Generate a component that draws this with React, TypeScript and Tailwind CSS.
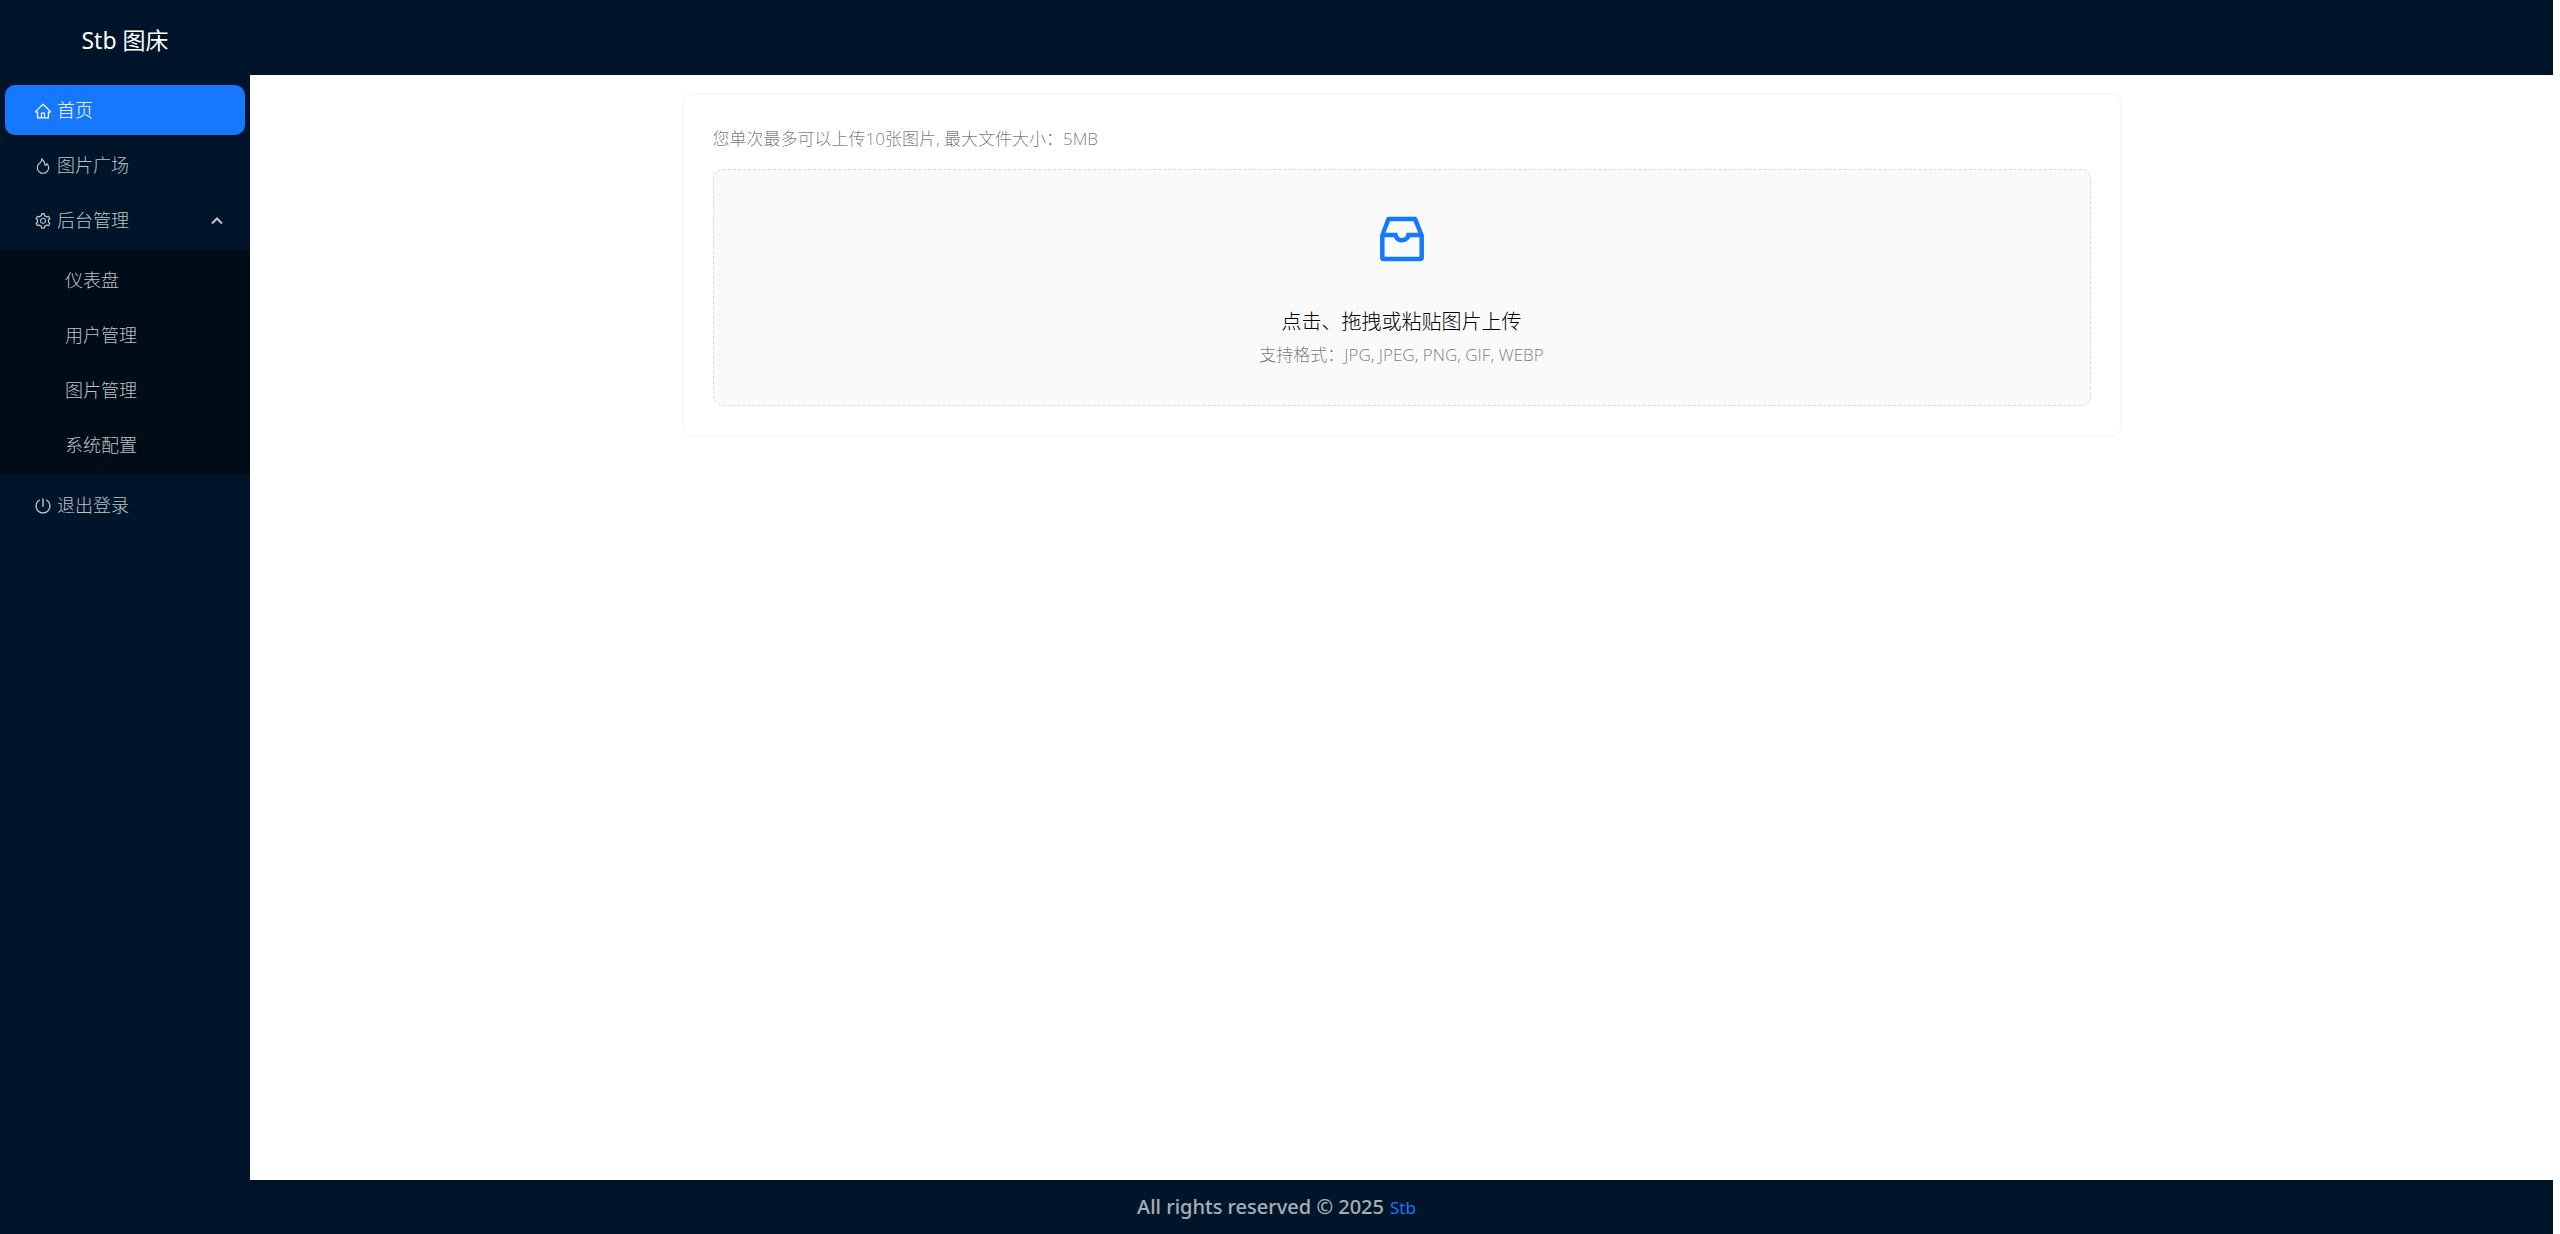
import { useState } from "react";
import {
  AiOutlineFire,
  AiOutlineHome,
  AiOutlineInbox,
  AiOutlinePoweroff,
  AiOutlineSetting,
} from "react-icons/ai";

const adminItems = [
  { key: "dashboard", label: "仪表盘" },
  { key: "users", label: "用户管理" },
  { key: "images", label: "图片管理" },
  { key: "system", label: "系统配置" },
];

const itemClass =
  "mx-[5px] flex h-[50px] items-center gap-[5px] rounded-[10px] pt-px pr-[22px] pl-[29px] text-left";

function Sidebar() {
  const [active, setActive] = useState("home");
  const [open, setOpen] = useState(true);

  const color = (key: string) =>
    active === key ? "bg-[#1677ff] text-white" : "text-white/75 hover:text-white";

  return (
    <nav className="flex w-[250px] shrink-0 flex-col gap-[5px] bg-[#001529] pt-[10px] text-[18px]">
      <button type="button" onClick={() => setActive("home")} className={`${itemClass} ${color("home")}`}>
        <AiOutlineHome className="size-[18px]" />
        首页
      </button>
      <button type="button" onClick={() => setActive("square")} className={`${itemClass} ${color("square")}`}>
        <AiOutlineFire className="size-[18px]" />
        图片广场
      </button>
      <button
        type="button"
        aria-expanded={open}
        onClick={() => setOpen(!open)}
        className={`${itemClass} text-white/75 hover:text-white`}
      >
        <AiOutlineSetting className="size-[18px]" />
        <span className="flex-1">后台管理</span>
        <svg viewBox="0 0 12 12" className={open ? "size-3" : "size-3 rotate-180"} fill="none">
          <path d="M1 8.5 6 3.5l5 5" stroke="currentColor" strokeWidth="2" />
        </svg>
      </button>
      {open && (
        <div className="flex flex-col gap-[5px] bg-[#000c17] py-[5px]">
          {adminItems.map((item) => (
            <button
              key={item.key}
              type="button"
              onClick={() => setActive(item.key)}
              className={`mx-[5px] flex h-[50px] items-center rounded-[10px] pt-px pl-[60px] text-left ${color(item.key)}`}
            >
              {item.label}
            </button>
          ))}
        </div>
      )}
      <button type="button" className={`${itemClass} text-white/75 hover:text-white`}>
        <AiOutlinePoweroff className="size-[18px]" />
        退出登录
      </button>
    </nav>
  );
}

function UploadCard() {
  return (
    <section className="mx-auto w-full max-w-[1440px] rounded-[10px] border-2 border-[#f8f8f8] bg-white px-[29px] pt-[30px] pb-[29px]">
      <p className="mb-4 leading-[28px] text-black/55">
        您单次最多可以上传10张图片, 最大文件大小：5MB
      </p>
      <label className="flex cursor-pointer flex-col items-center rounded-[10px] border border-dashed border-[#d9d9d9] bg-[#fafafa] pt-[39px] pb-[36px] hover:border-[#1677ff]">
        <input type="file" multiple accept="image/*" className="sr-only" />
        <AiOutlineInbox className="mb-[38px] size-[60px] text-[#1677ff]" />
        <span className="mb-1 text-[20px] leading-[30px] text-black">点击、拖拽或粘贴图片上传</span>
        <span className="leading-[28px] text-black/55">支持格式：JPG, JPEG, PNG, GIF, WEBP</span>
      </label>
    </section>
  );
}

export default function App() {
  return (
    <div className="flex min-h-screen flex-col bg-white pr-[7px] font-['Open_Sans','Noto_Sans_CJK_SC',sans-serif] text-[17px] font-light">
      <header className="flex h-[75px] items-center bg-[#001529] pb-[5px]">
        <h1 className="w-[250px] pt-[10px] text-center font-['Noto_Sans','Noto_Sans_CJK_SC',sans-serif] text-[23px] font-normal text-white">
          Stb 图床
        </h1>
      </header>
      <div className="flex flex-1">
        <Sidebar />
        <main className="flex-1 px-5 pt-[18px]">
          <UploadCard />
        </main>
      </div>
      <footer className="flex h-[54px] items-baseline justify-center gap-[6px] bg-[#001529] pt-[12px] font-['Noto_Sans',sans-serif] text-[20px] font-medium text-white/65">
        All rights reserved © 2025
        <a href="#" className="text-[17px] font-normal text-[#1677ff]">
          Stb
        </a>
      </footer>
    </div>
  );
}
